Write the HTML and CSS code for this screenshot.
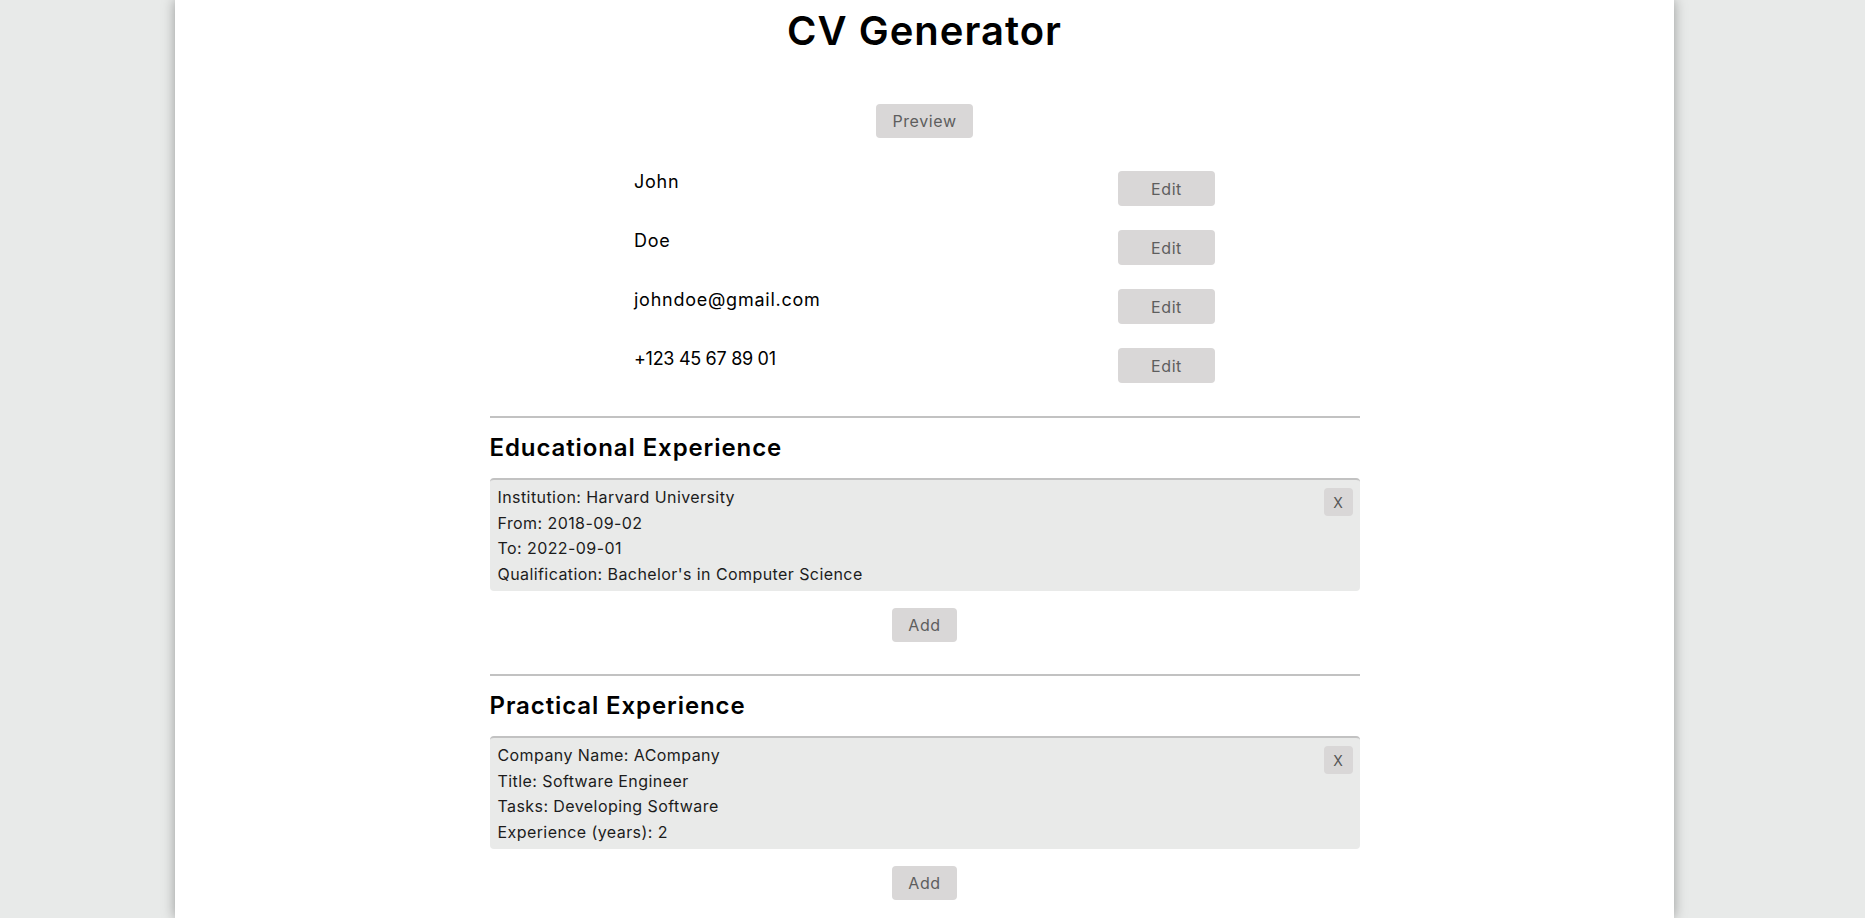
FILE: index.html
```html
<!DOCTYPE html>
<html lang="en">
<head>
<meta charset="utf-8">
<title>CV Generator</title>
<link rel="stylesheet" href="styles.css">
</head>
<body>
<div class="page">
  <div class="content">
    <h1 class="title">CV Generator</h1>
    <div class="preview-wrap"><button class="btn btn-wide">Preview</button></div>
    <div class="fields">
      <div class="field"><span class="field-text">John</span><button class="btn btn-wide">Edit</button></div>
      <div class="field"><span class="field-text">Doe</span><button class="btn btn-wide">Edit</button></div>
      <div class="field"><span class="field-text">johndoe@gmail.com</span><button class="btn btn-wide">Edit</button></div>
      <div class="field"><span class="field-text field-phone">+123 45 67 89 01</span><button class="btn btn-wide">Edit</button></div>
    </div>
    <section class="section">
      <h2 class="section-title">Educational Experience</h2>
      <div class="card">
        <div class="card-lines">
          <div>Institution: Harvard University</div>
          <div>From: 2018-09-02</div>
          <div>To: 2022-09-01</div>
          <div>Qualification: Bachelor's in Computer Science</div>
        </div>
        <button class="btn btn-x">X</button>
      </div>
      <div class="add-wrap"><button class="btn btn-add">Add</button></div>
    </section>
    <section class="section">
      <h2 class="section-title">Practical Experience</h2>
      <div class="card">
        <div class="card-lines">
          <div>Company Name: ACompany</div>
          <div>Title: Software Engineer</div>
          <div>Tasks: Developing Software</div>
          <div>Experience (years): 2</div>
        </div>
        <button class="btn btn-x">X</button>
      </div>
      <div class="add-wrap"><button class="btn btn-add">Add</button></div>
    </section>
  </div>
</div>
</body>
</html>
```
FILE: styles.css
```css
html, body {
  margin: 0;
  padding: 0;
  overflow: hidden;
}
body {
  background: #e8eae9;
  font-family: Inter, "Noto Sans", sans-serif;
  color: #000;
}
.page {
  width: 1499px;
  margin-left: 175px;
  min-height: 918px;
  background: #fff;
  box-shadow: 0 0 12px rgba(0, 0, 0, 0.35);
}
.content {
  width: 870px;
  margin: 0 auto;
}
.title {
  margin: 0;
  text-align: center;
  font-size: 40px;
  font-weight: 600;
  letter-spacing: 1px;
  line-height: 62px;
}
.preview-wrap {
  display: flex;
  justify-content: center;
  margin-top: 42px;
}
.btn {
  border: none;
  border-radius: 4px;
  background: #d9d7d7;
  color: #5e5e5e;
  font-family: Inter, "Noto Sans", sans-serif;
  font-size: 16px;
  letter-spacing: 0.6px;
  padding: 0;
  cursor: pointer;
}
.btn-wide {
  width: 97px;
  height: 34px;
}
.fields {
  width: 581px;
  margin: 33px auto 0;
  display: flex;
  flex-direction: column;
  gap: 24px;
}
.field {
  display: flex;
  justify-content: space-between;
  align-items: flex-start;
  height: 35px;
}
.field .btn-wide {
  height: 35px;
}
.field-text {
  font-size: 18px;
  letter-spacing: 0.75px;
  line-height: 22px;
}
.field-phone {
  letter-spacing: -0.3px;
}
.section {
  border-top: 2px solid #c2c2c2;
  margin-top: 33px;
}
.section + .section {
  margin-top: 32px;
}
.section-title {
  margin: 15px 0 15px;
  font-size: 24px;
  font-weight: 600;
  letter-spacing: 0.9px;
  line-height: 30px;
}
.card {
  display: flex;
  justify-content: space-between;
  align-items: flex-start;
  background: #e9eae9;
  border-top: 2px solid #c2c2c2;
  border-radius: 4px;
  padding: 5px 7px 4px 8px;
}
.card-lines {
  font-size: 16px;
  letter-spacing: 0.42px;
  line-height: 25.5px;
  color: #1c1c1c;
}
.btn-x {
  width: 29px;
  height: 28px;
  margin-top: 3px;
  font-size: 14px;
  letter-spacing: 0;
  color: #555;
}
.add-wrap {
  display: flex;
  justify-content: center;
  margin-top: 17px;
}
.btn-add {
  width: 65px;
  height: 34px;
}
```
